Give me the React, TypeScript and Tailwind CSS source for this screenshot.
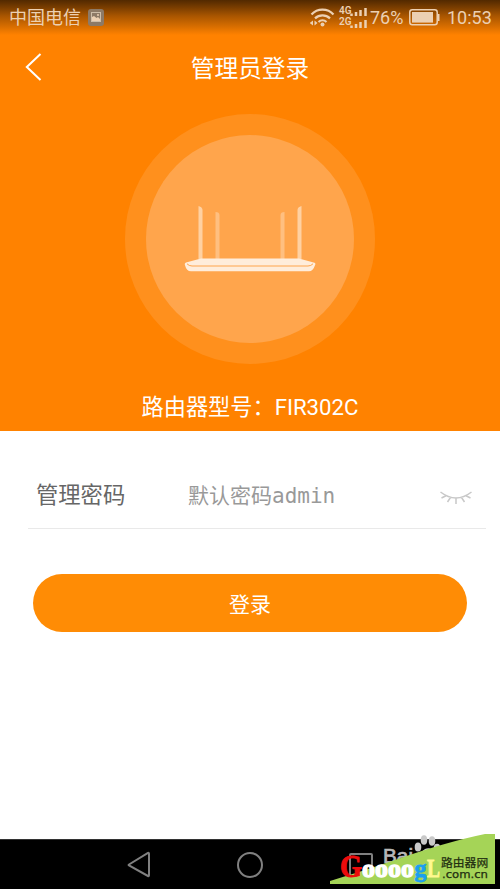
import React from 'react';

const StatusBar = () => (
  <div className="flex h-[35px] items-center bg-gradient-to-b from-[#522900] via-[#a85500] via-45% to-[#ff8200] pl-[9px] pr-2 text-[#ecd0b3]">
    <span className="pt-px text-[18px] leading-none">中国电信</span>
    <svg className="ml-[7px]" width="16" height="17" viewBox="0 0 16 17">
      <rect width="16" height="17" rx="3" fill="#8d7a67" />
      <rect x="3.5" y="3.5" width="9" height="9" fill="none" stroke="#cdbda9" />
      <path d="M4 12V8l2-1 2.5 2L10 8l2 2v2z" fill="#ecd0b3" />
      <circle cx="10" cy="6" r="1" fill="#ecd0b3" />
    </svg>
    <svg className="ml-auto" width="59" height="24" viewBox="0 0 59 24" fill="none" stroke="#ecd0b3">
      <path d="M1.5 8.500a15 15 0 0 1 22 0M5 12.400a11 11 0 0 1 15 0M8.500 16a6 6 0 0 1 8 0" strokeWidth="2.200" />
      <circle cx="12.500" cy="18.500" r="2" fill="#ecd0b3" stroke="none" />
      <path d="M3 14.500v5l-3.500-2.500zM4.500 14.500v5l3-2.500z" fill="#ecd0b3" stroke="none" />
      <g fill="#ecd0b3" stroke="none" fontFamily="Roboto, sans-serif" fontSize="10" fontWeight="600">
        <text x="29" y="8">4G</text>
        <text x="29" y="19">2G</text>
      </g>
      <path d="M41.500 7.500v2.500M46 6v4M50.500 4v6M55.500 2v8M41.500 19.500V22M46 18v4M50.500 16v6M55.500 14v8" strokeWidth="2.500" />
    </svg>
    <span className="ml-px w-[34px] text-[18px] leading-none">76%</span>
    <svg className="ml-[5px]" width="32" height="17" viewBox="0 0 32 17">
      <rect x="0.8" y="0.8" width="27.4" height="15" rx="2.5" fill="none" stroke="#ecd0b3" strokeWidth="1.5" />
      <rect x="3" y="3" width="21" height="10.6" fill="#ecd0b3" />
      <path d="M29.500 5v7" stroke="#ecd0b3" strokeWidth="2" />
    </svg>
    <span className="ml-[6px] w-[45px] text-[18px] leading-none">10:53</span>
  </div>
);

const RouterIcon = () => (
  <svg width="134" height="70" viewBox="0 0 134 70">
    <path d="M15.500 55V2q4 1 4 4v49zM118.500 55V2q-4 1-4 4v49z" fill="#ffd1a2" />
    <path d="M32.500 55V8q4 0 4 3v44zM101.500 55V8q-4 0-4 3v44z" fill="#ffbf80" />
    <path d="M18 54.500h98l15.500 4.200q1.500.8.500 2.500-2 6-6 6H8q-4.500 0-6-6-.8-2 1-2.700z" fill="#ffeddb" />
    <path d="M4 59.800q2 2.200 5 2.200h116q3 0 5-2.200" fill="none" stroke="#ffa54c" />
  </svg>
);

const Header = () => (
  <header className="flex h-[431px] flex-col bg-[#ff8200] text-white">
    <StatusBar />
    <div className="grid h-16 grid-cols-3 items-center">
      <svg className="ml-[25px]" width="17" height="28" viewBox="0 0 17 28" fill="none" stroke="white" strokeWidth="2">
        <path d="M15.500 1L1.800 14l13.700 13" />
      </svg>
      <h1 className="pt-[6px] text-center text-[23.700px] leading-none">管理员登录</h1>
    </div>
    <div className="mx-auto mt-[15px] flex size-[250px] shrink-0 items-center justify-center rounded-full bg-[#ff901d]">
      <div className="flex size-[208px] items-center justify-center rounded-full bg-[#ffa54c]">
        <RouterIcon />
      </div>
    </div>
    <p className="mt-8 text-center text-[22.200px] leading-[22px]">路由器型号：FIR302C</p>
  </header>
);

const ClosedEye = () => (
  <svg className="ml-auto mt-[3px]" width="32" height="15" viewBox="0 0 32 15" fill="none" stroke="#c8c8c8" strokeWidth="1.500">
    <path d="M.500 2Q16 14 31.500 2M6.500 5.500L1.500 8M10.500 7.500L7.500 12M16 8.500v5.500M21.500 7.500l3 4.500M25.500 5.500l5 2.500" />
  </svg>
);

const NavigationBar = () => (
  <nav className="flex h-[50px] items-center border-t border-[#333] bg-black pl-[127px]">
    <svg width="24" height="27" viewBox="0 0 24 27" fill="none" stroke="#808080" strokeWidth="2">
      <path d="M2 13.500L21 2q1-.5 1 1v21q0 1.500-1 1L2 14.500q-.8-.5 0-1z" />
    </svg>
    <div className="ml-[86px] size-[26px] rounded-full border-2 border-[#808080]" />
    <div className="ml-[86px] size-[24px] rounded-[2px] border-2 border-[#808080]" />
  </nav>
);

const SiteBadge = () => (
  <svg className="absolute bottom-0 right-0" width="180" height="64" viewBox="0 0 180 64">
    <text x="63" y="38" fontFamily="Liberation Sans, sans-serif" fontSize="20" fill="#b8b8b8" stroke="#b8b8b8" strokeWidth=".7" textLength="30" lengthAdjust="spacingAndGlyphs">Bai</text>
    <g fill="#c9c9c9">
      <ellipse cx="98" cy="22" rx="3.300" ry="4.500" />
      <ellipse cx="104" cy="15" rx="3.300" ry="4.700" />
      <ellipse cx="112" cy="16" rx="3.300" ry="4.700" />
      <ellipse cx="117" cy="23" rx="3.300" ry="4.300" />
      <path d="M97 35q1-6 8-11 6-3 10 5l5 7z" />
    </g>
    <path d="M10 56Q43 46 75 35Q126 17 165 9h10v50H10z" fill="#a5d457" />
    <g fontFamily="Liberation Serif, serif" fontWeight="700">
      <text x="20" y="52" fontSize="31" fill="#ed0c0c" stroke="#ed0c0c" textLength="22" lengthAdjust="spacingAndGlyphs">G</text>
      <text x="42" y="52" fontSize="25.500" fill="white" stroke="white" strokeWidth="1.300" textLength="52" lengthAdjust="spacingAndGlyphs">oooo</text>
      <text x="94.500" y="52" fontSize="26" fill="#1b9ff0" stroke="#1b9ff0" strokeWidth=".8" textLength="12" lengthAdjust="spacingAndGlyphs">g</text>
      <text x="107" y="52" fontSize="25" fill="#fff98f" stroke="#fff98f" strokeWidth=".8" textLength="13" lengthAdjust="spacingAndGlyphs">L</text>
    </g>
    <g fill="#222e10" stroke="#222e10" strokeWidth=".25">
      <text x="121" y="42" fontFamily="Noto Sans CJK SC, sans-serif" fontSize="11.800">路由器网</text>
      <text x="122" y="53" fontFamily="DejaVu Sans, sans-serif" fontSize="10" textLength="46" lengthAdjust="spacingAndGlyphs">.com.cn</text>
    </g>
  </svg>
);

export default function App() {
  return (
    <div className="relative flex h-[889px] w-[500px] flex-col overflow-hidden bg-white font-[Roboto,'Noto_Sans_CJK_SC',sans-serif]">
      <Header />
      <main className="flex-1">
        <div className="ml-7 mr-[14px] flex h-[98px] items-center border-b border-[#e9e9e9] pl-2 pr-[14px] pt-8">
          <span className="w-[152px] text-[22.300px] leading-none text-[#666]">管理密码</span>
          <span className="pt-px font-['DejaVu_Sans_Mono','Noto_Sans_CJK_SC',monospace] text-[21px] leading-none text-[#999]">默认密码admin</span>
          <ClosedEye />
        </div>
        <button className="mx-auto mt-[45px] flex h-[58px] w-[434px] items-center justify-center rounded-full bg-[#ff8c05] pt-[5px] text-[21px] text-white">
          登录
        </button>
      </main>
      <NavigationBar />
      <SiteBadge />
    </div>
  );
}
